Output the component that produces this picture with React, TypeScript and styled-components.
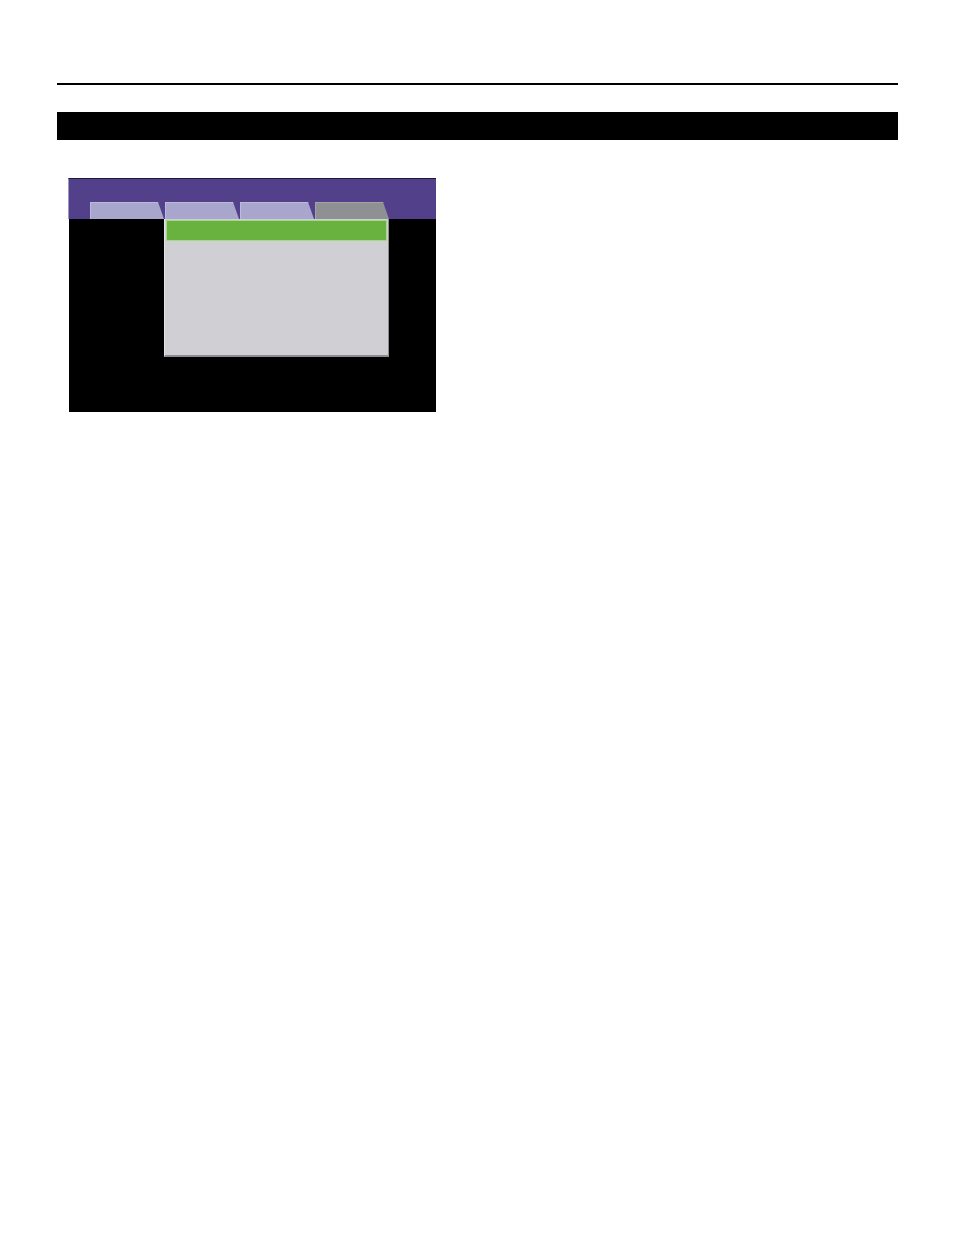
import React from "react";
import styled, { createGlobalStyle } from "styled-components";

const Global = createGlobalStyle`
  html, body { margin: 0; padding: 0; background: #ffffff; }
  body { font-family: "Liberation Sans", Arial, sans-serif; }
`;

const Page = styled.div`
  width: 954px;
  height: 1235px;
  box-sizing: border-box;
  padding: 83px 56px 0 57px;
  display: flex;
  flex-direction: column;
`;

const Rule = styled.div`
  height: 2px;
  background: #000;
`;

const SectionBar = styled.div`
  margin-top: 27px;
  height: 28px;
  background: #000;
`;

const Screen = styled.div`
  margin-top: 38px;
  margin-left: 11px;
  width: 368px;
  height: 234px;
  display: flex;
  flex-direction: column;
`;

const TopStrip = styled.div`
  height: 41px;
  box-sizing: border-box;
  border-top: 1px solid #1c1a2c;
  border-left: 1px solid #9e98c8;
  background: #52418a;
  display: flex;
  align-items: flex-end;
  gap: 1px;
  padding-left: 21px;
`;

const Tab = styled.div<{ $active?: boolean }>`
  width: 74px;
  height: 17px;
  box-sizing: border-box;
  background: ${(p) => (p.$active ? "#8f9093" : "#a9a6cd")};
  border-top: 1px solid ${(p) => (p.$active ? "#a3a4a6" : "#bdbadb")};
  border-left: 1px solid ${(p) => (p.$active ? "#a3a4a6" : "#bdbadb")};
  clip-path: polygon(0 0, calc(100% - 6px) 0, 100% 100%, 0 100%);
`;

const Body = styled.div`
  flex: 1;
  margin-left: 1px;
  padding-left: 95px;
  background: #000;
`;

const Menu = styled.div`
  width: 225px;
  height: 138px;
  box-sizing: border-box;
  background: #d0cfd4;
  border-left: 1px solid #e4e3e8;
  border-right: 1px solid #8d8c92;
  border-bottom: 2px solid #8d8c92;
  padding: 1px 1px 0 1px;
`;

const MenuItem = styled.div<{ $selected?: boolean }>`
  height: 21px;
  box-sizing: border-box;
  background: ${(p) => (p.$selected ? "#6ab23f" : "transparent")};
  border: 1px solid ${(p) => (p.$selected ? "#a7d78c" : "transparent")};
`;

export default function App() {
  return (
    <>
      <Global />
      <Page>
        <Rule />
        <SectionBar />
        <Screen>
          <TopStrip>
            <Tab />
            <Tab />
            <Tab />
            <Tab $active />
          </TopStrip>
          <Body>
            <Menu>
              <MenuItem $selected />
            </Menu>
          </Body>
        </Screen>
      </Page>
    </>
  );
}
